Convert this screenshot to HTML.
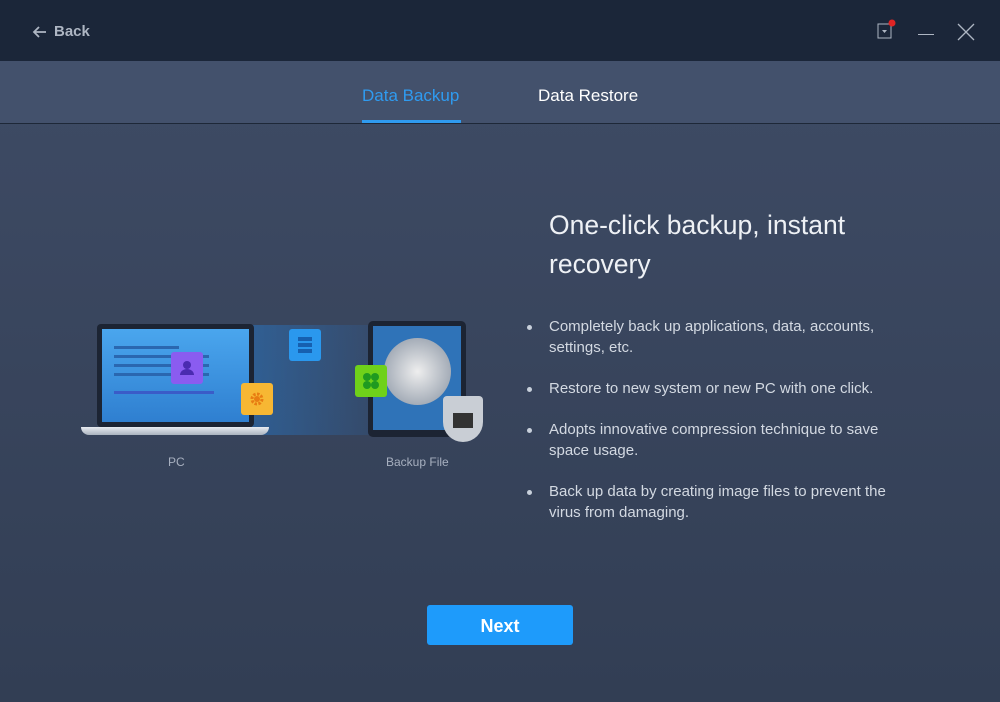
<!DOCTYPE html>
<html><head><style>
*{margin:0;padding:0;box-sizing:border-box}
body{width:1000px;height:702px;overflow:hidden;font-family:"Liberation Sans",sans-serif;background:#2f3b50}
.win{position:absolute;left:0;top:0;width:1000px;height:702px;background:linear-gradient(#3f4c66,#323e54)}
.hdr{position:absolute;left:0;top:0;width:1000px;height:61px;background:#1b2639}
.tabs{position:absolute;left:0;top:61px;width:1000px;height:63px;background:#43516c;border-bottom:1px solid #1e2838}
.t{position:absolute;top:25px;font-size:17px}
.ul{position:absolute;left:362px;top:120px;width:99px;height:3px;background:#2f9bf0}
.title{position:absolute;left:549px;top:206px;font-size:26.5px;line-height:39px;color:#eef1f5}
ul{position:absolute;left:549px;top:316px;width:370px;list-style:none;color:#d3d9e2;font-size:15px;line-height:21px}
li{position:relative;margin-bottom:20px}
li:before{content:"";position:absolute;left:-22px;top:9px;width:5px;height:5px;border-radius:50%;background:#c8d0db}
.btn{position:absolute;left:427px;top:605px;width:146px;height:40px;background:#1e9bfb;border-radius:3px;color:#fff;font-size:18px;font-weight:bold;text-align:center;line-height:42px}
.lab{position:absolute;font-size:12px;color:#a7b0bf}
.sq{position:absolute;width:32px;height:32px;border-radius:3px}
</style></head><body><div class="win">
<div class="hdr">
<svg style="position:absolute;left:32px;top:24px" width="16" height="16"><path d="M14 8H2M7 3L2 8l5 5" stroke="#aeb6c3" stroke-width="1.8" fill="none"/></svg>
<div style="position:absolute;left:54px;top:23px;font-size:15px;font-weight:bold;color:#aeb6c3">Back</div>
<svg style="position:absolute;left:876px;top:18px" width="20" height="22"><rect x="2" y="6" width="13" height="14" fill="none" stroke="#aeb6c3"/><path d="M6 12h5l-2.5 3z" fill="#aeb6c3"/><circle cx="16" cy="5" r="3.5" fill="#e02424"/></svg>
<div style="position:absolute;left:918px;top:34px;width:16px;height:1px;background:#aeb6c3"></div>
<svg style="position:absolute;left:957px;top:23px" width="18" height="18"><path d="M1 1l16 16M17 1L1 17" stroke="#aeb6c3" stroke-width="1.3"/></svg>
</div>
<div class="tabs"></div>
<div class="t" style="left:362px;top:86px;color:#2f9bf0">Data Backup</div>
<div class="t" style="left:538px;top:86px;color:#fff">Data Restore</div>
<div class="ul"></div>
<div style="position:absolute;left:252px;top:325px;width:120px;height:110px;background:linear-gradient(90deg,rgba(40,120,200,.5),rgba(40,110,190,.15))"></div>
<div style="position:absolute;left:97px;top:324px;width:157px;height:103px;background:#1c2433;border-radius:4px"></div>
<div style="position:absolute;left:102px;top:329px;width:147px;height:93px;background:linear-gradient(#4aa6ee,#2f7fd0)"></div>
<div style="position:absolute;left:114px;top:346px;width:65px;height:3px;background:#2a67b0"></div>
<div style="position:absolute;left:114px;top:355px;width:95px;height:3px;background:#2a67b0"></div>
<div style="position:absolute;left:114px;top:364px;width:95px;height:3px;background:#2a67b0"></div>
<div style="position:absolute;left:114px;top:373px;width:95px;height:3px;background:#2a67b0"></div>
<div style="position:absolute;left:114px;top:391px;width:100px;height:3px;background:#3a5cc8"></div>
<div style="position:absolute;left:81px;top:427px;width:188px;height:8px;background:linear-gradient(#e8ecf1,#aab3bf);border-radius:0 0 8px 8px"></div>
<div style="position:absolute;left:368px;top:321px;width:98px;height:116px;background:#1c2433;border-radius:5px"></div>
<div style="position:absolute;left:373px;top:326px;width:88px;height:104px;background:#2f73b8"></div>
<div style="position:absolute;left:384px;top:338px;width:67px;height:67px;border-radius:50%;background:radial-gradient(circle,#eee,#a5adb8 70%,#ccd2da)"></div>
<div style="position:absolute;left:443px;top:396px;width:40px;height:46px;background:#c9ced5;border-radius:4px 4px 20px 20px"></div>
<div style="position:absolute;left:453px;top:413px;width:20px;height:15px;background:#333"></div>
<div class="sq" style="left:171px;top:352px;background:#8a5cf0"><svg width="32" height="32"><circle cx="16" cy="13" r="4" fill="#4a2bb0"/><path d="M9 23a7 6 0 0 1 14 0z" fill="#4a2bb0"/></svg></div>
<div class="sq" style="left:241px;top:383px;background:#f7b733"><svg width="32" height="32"><circle cx="16" cy="16" r="5" fill="none" stroke="#e87d12" stroke-width="3" stroke-dasharray="2.5 1.4"/><circle cx="16" cy="16" r="3" fill="#e87d12"/></svg></div>
<div class="sq" style="left:289px;top:329px;background:#2a98ee"><svg width="32" height="32"><rect x="9" y="8" width="14" height="4" fill="#1660b0"/><rect x="9" y="14" width="14" height="4" fill="#1660b0"/><rect x="9" y="20" width="14" height="4" fill="#1660b0"/></svg></div>
<div class="sq" style="left:355px;top:365px;background:#6fd11a"><svg width="32" height="32"><circle cx="12" cy="12" r="4" fill="#1f9a20"/><circle cx="20" cy="12" r="4" fill="#1f9a20"/><circle cx="12" cy="20" r="4" fill="#1f9a20"/><circle cx="20" cy="20" r="4" fill="#1f9a20"/></svg></div>
<div class="lab" style="left:168px;top:455px">PC</div>
<div class="lab" style="left:386px;top:455px">Backup File</div>
<div class="title">One-click backup, instant<br>recovery</div>
<ul>
<li>Completely back up applications, data, accounts, settings, etc.</li>
<li>Restore to new system or new PC with one click.</li>
<li>Adopts innovative compression technique to save space usage.</li>
<li>Back up data by creating image files to prevent the virus from damaging.</li>
</ul>
<div class="btn">Next</div>
</div></body></html>
